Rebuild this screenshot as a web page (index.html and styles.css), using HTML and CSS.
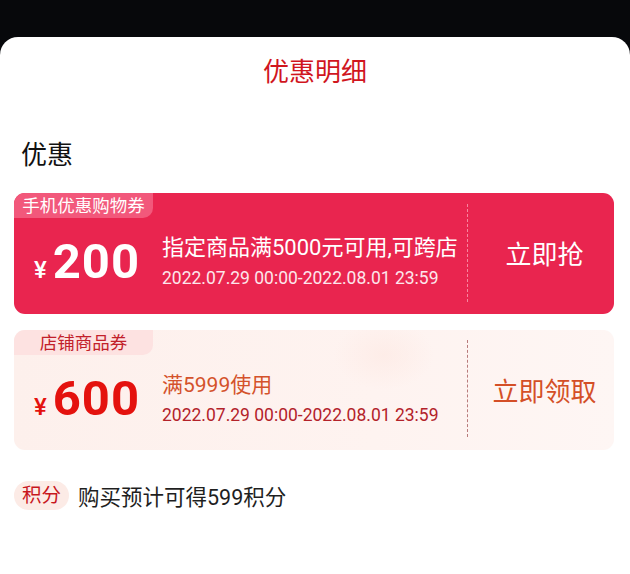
FILE: index.html
```html
<!DOCTYPE html>
<html lang="zh-CN">
<head>
<meta charset="utf-8">
<title>优惠明细</title>
<link rel="stylesheet" href="styles.css">
</head>
<body>
<div class="topbar"></div>
<div class="sheet">
  <h1 class="title">优惠明细</h1>
  <div class="section-label">优惠</div>

  <div class="coupon coupon-red">
    <div class="coupon-main">
      <div class="tab">手机优惠购物券</div>
      <div class="body">
        <div class="amount"><span class="yen">¥</span><span class="num">200</span></div>
        <div class="info">
          <div class="cond">指定商品满5000元可用,可跨店</div>
          <div class="date">2022.07.29 00:00-2022.08.01 23:59</div>
        </div>
      </div>
    </div>
    <div class="divider"></div>
    <div class="action">立即抢</div>
  </div>

  <div class="coupon coupon-light">
    <div class="coupon-main">
      <div class="tab">店铺商品券</div>
      <div class="body">
        <div class="amount"><span class="yen">¥</span><span class="num">600</span></div>
        <div class="info">
          <div class="cond">满5999使用</div>
          <div class="date">2022.07.29 00:00-2022.08.01 23:59</div>
        </div>
      </div>
    </div>
    <div class="divider"></div>
    <div class="action">立即领取</div>
  </div>

  <div class="points">
    <span class="pill">积分</span>
    <span class="points-text">购买预计可得599积分</span>
  </div>
</div>
</body>
</html>
```

FILE: styles.css
```css
html, body {
  margin: 0;
  padding: 0;
}
body {
  background: #07080b;
  font-family: Roboto, "Noto Sans CJK SC", sans-serif;
  width: 630px;
  height: 574px;
  overflow: hidden;
}
.topbar {
  height: 37px;
}
.sheet {
  background: #ffffff;
  border-radius: 18px 18px 0 0;
  height: 537px;
  padding: 0 16px 0 14px;
  box-sizing: border-box;
}
.title {
  margin: 0;
  padding-top: 20px;
  font-size: 26px;
  line-height: 30px;
  font-weight: 400;
  color: #d0161e;
  text-align: center;
  padding-left: 2px;
}
.section-label {
  margin-top: 52px;
  padding-left: 7px;
  font-size: 26px;
  line-height: 32px;
  color: #111111;
}
.coupon {
  display: flex;
  border-radius: 11px;
  overflow: hidden;
  height: 121px;
}
.coupon-red {
  margin-top: 22px;
  background: #e9254f;
}
.coupon-light {
  margin-top: 16px;
  height: 120px;
  background:
    radial-gradient(ellipse 50px 35px at 370px 25px, rgba(253, 232, 226, 0.6), rgba(253, 232, 226, 0)),
    linear-gradient(90deg, #fdf0ec 0%, #fef3f0 60%, #fef6f4 100%);
}
.coupon-main {
  width: 453px;
  display: flex;
  flex-direction: column;
}
.tab {
  width: 139px;
  height: 25px;
  line-height: 26px;
  font-size: 17.5px;
  text-align: center;
  border-radius: 0 0 10px 0;
}
.coupon-red .tab {
  background: #f2587b;
  color: #ffffff;
}
.coupon-light .tab {
  background: #fde2e1;
  color: #c2202a;
}
.body {
  flex: 1;
  display: flex;
  align-items: center;
  padding-bottom: 8px;
}
.amount {
  width: 148px;
  padding-left: 20px;
  box-sizing: border-box;
  display: flex;
  align-items: baseline;
}
.yen {
  font-size: 24px;
  font-weight: 500;
  margin-right: 6px;
}
.num {
  font-size: 49px;
  line-height: 58px;
  font-weight: 700;
  letter-spacing: 1px;
}
.coupon-red .amount { color: #ffffff; }
.coupon-light .amount { color: #e4120e; }
.info {
  display: flex;
  flex-direction: column;
  gap: 6px;
}
.cond {
  font-size: 22px;
  line-height: 26px;
}
.coupon-light .cond {
  font-size: 21px;
}
.date {
  font-size: 17.5px;
  line-height: 22px;
}
.coupon-red .cond { color: #ffffff; }
.coupon-red .date { color: #fde6eb; }
.coupon-light .cond { color: #d4522b; }
.coupon-light .date { color: #b3222a; }
.divider {
  width: 0;
  margin: 11px 0 12px;
}
.coupon-red .divider {
  border-left: 1.5px dashed #f7859f;
}
.coupon-light .divider {
  margin: 10px 0 13px;
  border-left: 1.5px dashed #b87b7b;
}
.action {
  flex: 1;
  display: flex;
  align-items: center;
  justify-content: center;
  padding-left: 7px;
  padding-bottom: 2px;
  font-size: 26px;
}
.coupon-red .action { color: #ffffff; }
.coupon-light .action { color: #d44f27; }
.points {
  margin-top: 30px;
  display: flex;
  align-items: center;
  gap: 9px;
}
.pill {
  display: inline-block;
  height: 29px;
  line-height: 29px;
  padding: 0 8px;
  border-radius: 15px;
  background: #fcebe6;
  color: #c8161d;
  font-size: 19.5px;
}
.points-text {
  font-size: 21.5px;
  color: #1f1f1f;
}
```
